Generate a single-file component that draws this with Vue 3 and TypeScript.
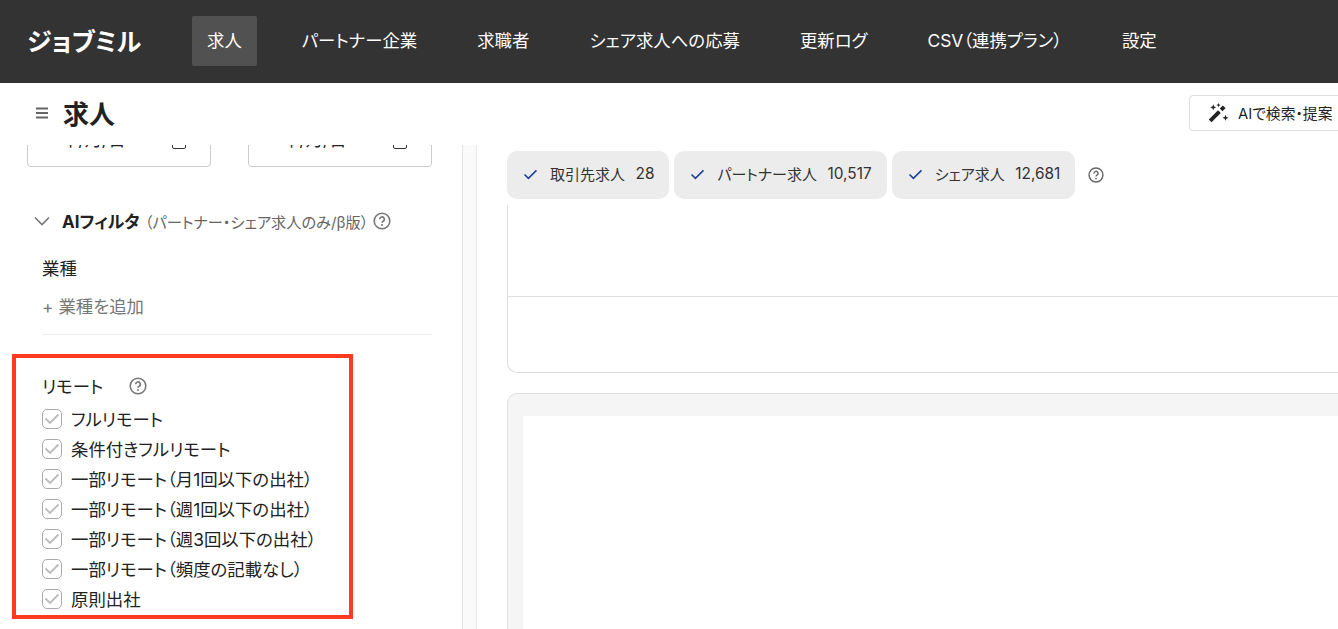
<template>
  <div class="page">
    <header class="topbar">
      <div class="logo">ジョブミル</div>
      <nav class="nav">
        <a v-for="item in navItems" :key="item" class="nav-item" :class="{ active: item === '求人' }">{{ item }}</a>
      </nav>
    </header>

    <div class="subbar">
      <svg class="menu-icon" viewBox="0 0 14 12" width="14" height="12">
        <path d="M1 1.5h12M1 6h12M1 10.5h12" stroke="#666" stroke-width="1.8" fill="none" />
      </svg>
      <h1 class="title">求人</h1>
      <button class="ai-button">
        <svg viewBox="0 0 24 24" width="21" height="21">
          <path d="M2.5 21.5L13 11" stroke="#222" stroke-width="4.4" fill="none" />
          <path d="M15 9l3.5-3.5" stroke="#222" stroke-width="4.4" fill="none" />
          <path
            fill="#222"
            d="M6 2.500l1 2.500 2.500 1L7 7 6 9.500 5 7 2.500 6 5 5zM12 1l.7 1.800 1.800.7-1.800.7L12 6l-.7-1.800-1.800-.7 1.800-.7zM20 14.500l1 2.500 2.500 1-2.500 1-1 2.500-1-2.500-2.500-1 2.500-1z"
          />
        </svg>
        <span>AIで検索・提案</span>
      </button>
    </div>

    <div class="body">
      <aside class="sidebar">
        <div class="dates">
          <div v-for="n in 2" :key="n" class="date-input">
            <span class="date-text">年/月/日</span>
            <i class="cal"></i>
          </div>
        </div>

        <div class="ai-head">
          <svg viewBox="0 0 16 10" width="16" height="10">
            <path d="M1 1.500l7 7 7-7" stroke="#777" stroke-width="1.6" fill="none" />
          </svg>
          <strong>AIフィルタ</strong>
          <span class="ai-note">（パートナー・シェア求人のみ/β版）</span>
          <svg class="help" viewBox="0 0 18 18" width="18" height="18">
            <circle cx="9" cy="9" r="7.8" stroke="#777" stroke-width="1.6" fill="none" />
            <path d="M6.700 7.200a2.300 2.300 0 1 1 3.400 2c-.7.4-1.100.8-1.100 1.600" stroke="#777" stroke-width="1.6" fill="none" />
            <circle cx="9" cy="13" r="1" fill="#777" />
          </svg>
        </div>

        <div class="industry">
          <div class="field-label">業種</div>
          <div class="add-link">+ 業種を追加</div>
        </div>

        <section class="remote">
          <div class="remote-head">
            <span class="remote-title">リモート</span>
            <svg viewBox="0 0 18 18" width="18" height="18">
              <circle cx="9" cy="9" r="7.8" stroke="#777" stroke-width="1.6" fill="none" />
              <path d="M6.700 7.200a2.300 2.300 0 1 1 3.400 2c-.7.4-1.100.8-1.100 1.600" stroke="#777" stroke-width="1.6" fill="none" />
              <circle cx="9" cy="13" r="1" fill="#777" />
            </svg>
          </div>
          <label v-for="opt in remoteOptions" :key="opt" class="check-row">
            <span class="box">
              <svg viewBox="0 0 20 20" width="20" height="20">
                <path d="M3.500 9.500l4.500 4.500 8.500-8.500" stroke="#bbb" stroke-width="1.8" fill="none" />
              </svg>
            </span>
            <span class="check-text">{{ opt }}</span>
          </label>
        </section>
      </aside>

      <div class="strip"></div>

      <main class="main">
        <div class="chips">
          <div v-for="chip in chips" :key="chip.label" class="chip">
            <svg viewBox="0 0 16 12" width="15" height="11">
              <path d="M1.500 6l4.200 4.200L14.500 1.500" stroke="#1c3f9e" stroke-width="1.7" fill="none" />
            </svg>
            <span class="chip-label">{{ chip.label }}</span>
            <span class="chip-count">{{ chip.count }}</span>
          </div>
          <svg class="chip-help" viewBox="0 0 18 18" width="16" height="16">
            <circle cx="9" cy="9" r="7.8" stroke="#666" stroke-width="1.6" fill="none" />
            <path d="M6.700 7.200a2.300 2.300 0 1 1 3.400 2c-.7.4-1.100.8-1.100 1.600" stroke="#666" stroke-width="1.6" fill="none" />
            <circle cx="9" cy="13" r="1" fill="#666" />
          </svg>
        </div>

        <div class="table-card">
          <div class="table-row"></div>
          <div class="table-row last"></div>
        </div>

        <div class="grey-card">
          <div class="inner-card"></div>
        </div>
      </main>
    </div>
  </div>
</template>

<script setup lang="ts">
const navItems: string[] = [
  '求人',
  'パートナー企業',
  '求職者',
  'シェア求人への応募',
  '更新ログ',
  'CSV（連携プラン）',
  '設定'
]

const remoteOptions: string[] = [
  'フルリモート',
  '条件付きフルリモート',
  '一部リモート（月1回以下の出社）',
  '一部リモート（週1回以下の出社）',
  '一部リモート（週3回以下の出社）',
  '一部リモート（頻度の記載なし）',
  '原則出社'
]

const chips = [
  { label: '取引先求人', count: '28' },
  { label: 'パートナー求人', count: '10,517' },
  { label: 'シェア求人', count: '12,681' }
]
</script>

<style>
html,
body {
  margin: 0;
  overflow: hidden;
}
</style>

<style scoped>
.page {
  width: 1338px;
  height: 629px;
  overflow: hidden;
  display: flex;
  flex-direction: column;
  background: #fff;
  color: #222;
  font-family: Inter, "Noto Sans CJK JP", sans-serif;
  font-feature-settings: "palt";
}

.topbar {
  height: 83px;
  flex: none;
  box-sizing: border-box;
  display: flex;
  align-items: center;
  background: #333;
  color: #fff;
  padding: 0 0 1px 27px;
}

.logo {
  width: 165px;
  padding-bottom: 2px;
  font-size: 25px;
  font-weight: 700;
  white-space: nowrap;
}

.nav {
  display: flex;
  gap: 30px;
}

.nav-item {
  height: 50px;
  box-sizing: border-box;
  padding: 0 15px 3px;
  display: flex;
  align-items: center;
  border-radius: 2px;
  font-size: 17.4px;
  white-space: nowrap;
}

.nav-item.active {
  background: #515151;
}

.subbar {
  height: 62px;
  flex: none;
  box-sizing: border-box;
  display: flex;
  align-items: center;
  padding: 0 0 2px 35px;
  position: relative;
  z-index: 1;
  background: #fff;
}

.menu-icon {
  margin-right: 14px;
}

.title {
  margin: 0;
  padding-bottom: 2px;
  font-size: 26px;
  font-weight: 700;
}

.ai-button {
  margin-left: auto;
  margin-right: -10px;
  width: 159px;
  height: 36px;
  padding: 0 0 1px 18px;
  display: flex;
  align-items: center;
  gap: 9px;
  background: #fff;
  border: 1px solid #ddd;
  border-radius: 4px;
  color: #222;
  font: inherit;
  font-size: 14.8px;
  white-space: nowrap;
}

.body {
  flex: 1;
  min-height: 0;
  display: flex;
}

.sidebar {
  width: 463px;
  flex: none;
  overflow: hidden;
  box-sizing: border-box;
  border-right: 1px solid #e3e3e3;
}

.dates {
  display: flex;
  gap: 37px;
  margin: -28px 0 0 27px;
}

.date-input {
  width: 184px;
  height: 50px;
  box-sizing: border-box;
  display: flex;
  align-items: center;
  justify-content: space-between;
  padding: 0 24px 0 33px;
  border: 1px solid #ccc;
  border-radius: 4px;
  font-size: 17.4px;
}

.date-text {
  padding-bottom: 7px;
}

.cal {
  width: 14px;
  height: 14px;
  box-sizing: border-box;
  border: 1.5px solid #333;
  border-radius: 2px;
}

.ai-head {
  margin: 43px 0 0 34px;
  height: 22px;
  display: flex;
  align-items: center;
  font-size: 17px;
}

.ai-head strong {
  margin: 0 5px 0 12px;
  padding-bottom: 2px;
  font-weight: 700;
}

.ai-note {
  padding-bottom: 1px;
  font-size: 15.2px;
  color: #666;
  white-space: nowrap;
}

.help {
  margin-left: 5px;
}

.industry {
  margin: 25px 30px 0 42px;
  padding-bottom: 15px;
  border-bottom: 1px solid #eee;
  font-size: 17.4px;
}

.field-label {
  line-height: 24px;
}

.add-link {
  margin-top: 14px;
  line-height: 24px;
  color: #777;
}

.remote {
  margin: 19px 0 0 12px;
  width: 341px;
  height: 265px;
  box-sizing: border-box;
  border: 4px solid #ff3b1f;
  padding: 15px 0 0 26px;
  font-size: 17.4px;
}

.remote-head {
  height: 26px;
  display: flex;
  align-items: center;
  gap: 26px;
  margin-bottom: 5px;
}

.remote-title {
  padding-bottom: 2px;
}

.check-row {
  height: 30px;
  display: flex;
  align-items: center;
  gap: 9px;
}

.check-text {
  padding-bottom: 2px;
  white-space: nowrap;
}

.box {
  width: 20px;
  height: 20px;
  box-sizing: border-box;
  display: flex;
  align-items: center;
  justify-content: center;
  border: 1px solid #aaa;
  border-radius: 5px;
}

.box svg {
  flex: none;
}

.strip {
  width: 14px;
  flex: none;
  box-sizing: border-box;
  background: #fafafa;
  border-right: 1px solid #e8e8e8;
}

.main {
  flex: 1;
  min-width: 0;
  overflow: hidden;
  padding: 6px 0 0 30px;
}

.chips {
  display: flex;
  align-items: center;
  gap: 5px;
  height: 48px;
}

.chip {
  height: 48px;
  box-sizing: border-box;
  display: flex;
  align-items: center;
  padding: 0 15px 4px 16px;
  background: #ececec;
  border-radius: 10px;
  font-size: 15px;
  color: #333;
  white-space: nowrap;
}

.chip svg {
  margin-top: 2px;
}

.chip-label {
  margin: 0 10.5px 0 12px;
}

.chip-count {
  font-size: 15.4px;
}

.chip-help {
  margin-left: 8px;
}

.table-card {
  width: 1000px;
  margin-top: 6px;
  box-sizing: border-box;
  border: 1px solid #ddd;
  border-top: none;
  border-radius: 0 0 10px 10px;
}

.table-row {
  height: 91px;
  border-bottom: 1px solid #ddd;
}

.table-row.last {
  height: 75px;
  border-bottom: none;
}

.grey-card {
  width: 1000px;
  height: 400px;
  margin-top: 20px;
  box-sizing: border-box;
  padding: 22px 0 0 15px;
  background: #f5f5f5;
  border: 1px solid #e0e0e0;
  border-radius: 10px;
}

.inner-card {
  height: 100%;
  background: #fff;
}
</style>
